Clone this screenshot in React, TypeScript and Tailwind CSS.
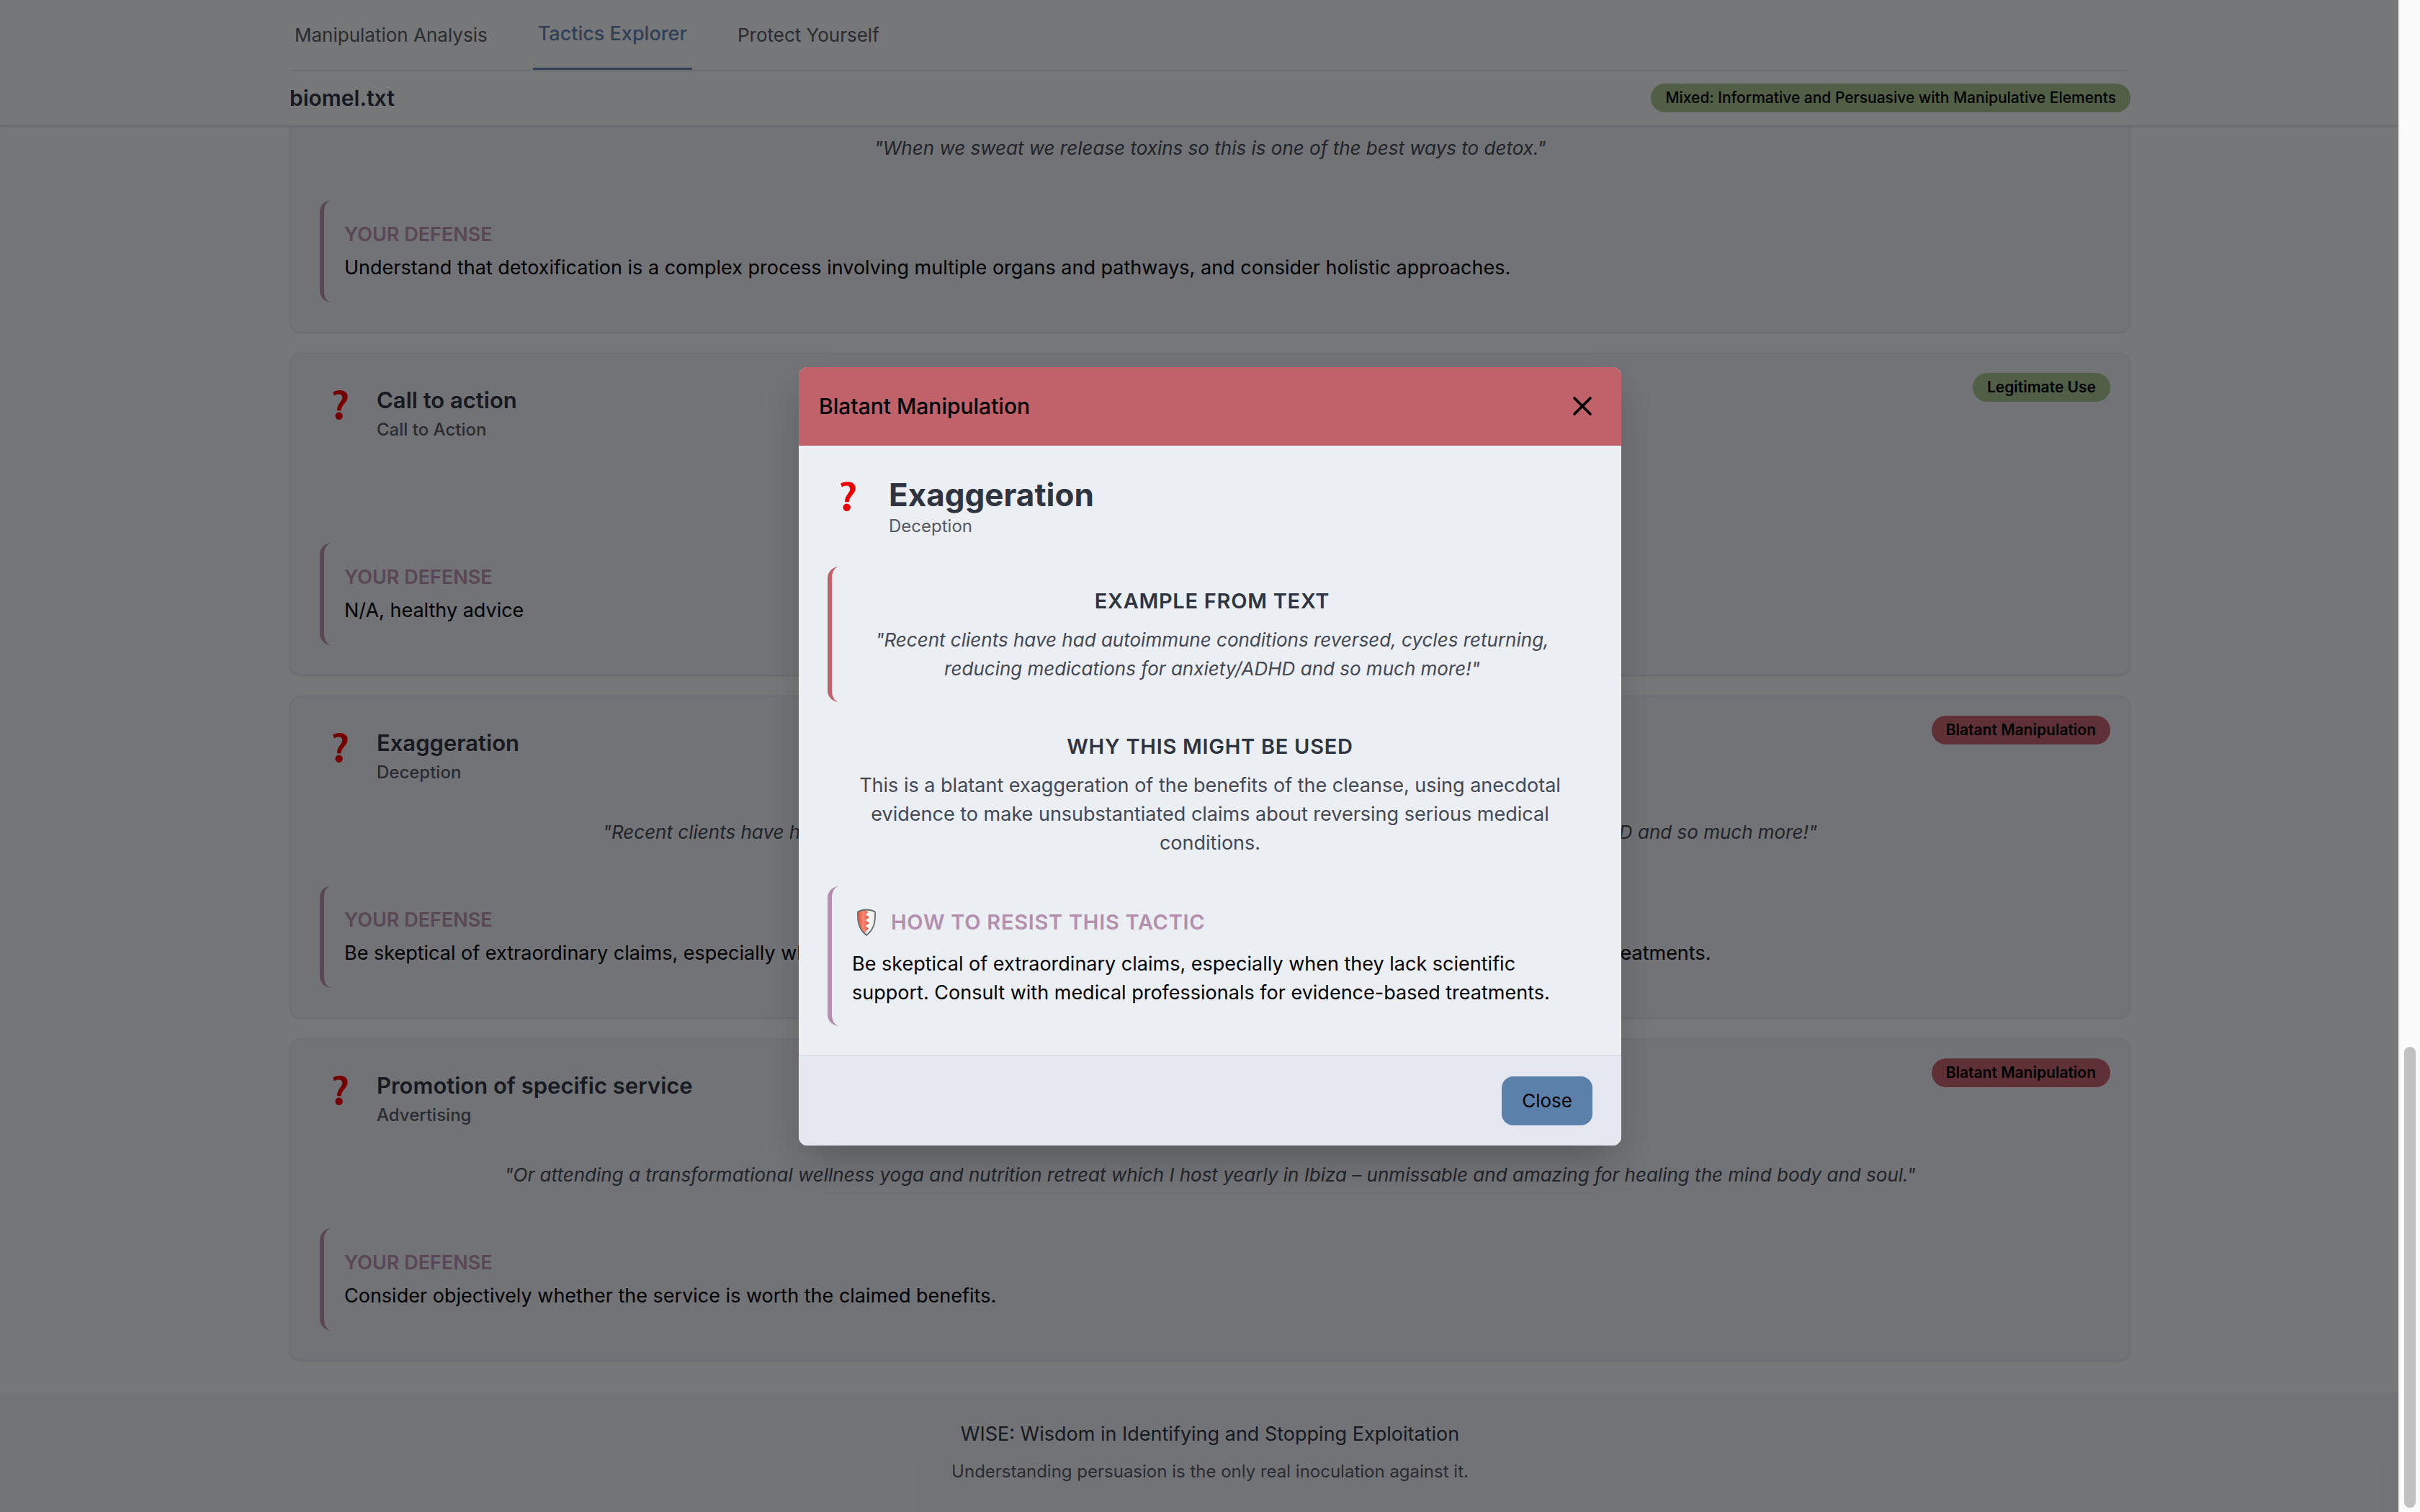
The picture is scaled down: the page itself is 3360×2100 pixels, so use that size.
import React from "react";
import { X } from "lucide-react";

type Tone = "green" | "red";

interface Tactic {
  name: string;
  category: string;
  rating: string;
  tone: Tone;
  quote: string;
  defense: string;
}

const tactics: Tactic[] = [
  {
    name: "Call to action",
    category: "Call to Action",
    rating: "Legitimate Use",
    tone: "green",
    quote: "",
    defense: "N/A, healthy advice",
  },
  {
    name: "Exaggeration",
    category: "Deception",
    rating: "Blatant Manipulation",
    tone: "red",
    quote:
      '"Recent clients have had autoimmune conditions reversed, cycles returning, reducing medications for anxiety/ADHD and so much more!"',
    defense:
      "Be skeptical of extraordinary claims, especially when they lack scientific support. Consult with medical professionals for evidence-based treatments.",
  },
  {
    name: "Promotion of specific service",
    category: "Advertising",
    rating: "Blatant Manipulation",
    tone: "red",
    quote:
      '"Or attending a transformational wellness yoga and nutrition retreat which I host yearly in Ibiza – unmissable and amazing for healing the mind body and soul."',
    defense: "Consider objectively whether the service is worth the claimed benefits.",
  },
];

function QuestionMark({ className }: { className: string }) {
  return (
    <svg viewBox="0 0 21 41" className={className} aria-hidden="true">
      <path
        d="M0.300 2.600C3 .9 6.200 0 9.800 0c6.600 0 10.900 3.500 10.900 9.100 0 4.300-2.200 7-4.700 9.800-2.500 2.900-4.200 5.200-4.300 9.300H6.100c-.1-5.300 1.900-8.500 4.300-11.700 1.700-2.300 2.900-4 2.900-6.400 0-2.900-1.900-4.700-5-4.700-2.300 0-4.500.7-6.400 2.100z"
        fill="#ec0000"
      />
      <circle cx="8.700" cy="35.700" r="5.200" fill="#ec0000" />
    </svg>
  );
}

function Shield() {
  return (
    <svg viewBox="0 0 28 38" className="h-[38px] w-7" aria-hidden="true">
      <defs>
        <linearGradient id="shieldRed" x1="0" x2="1">
          <stop offset="0" stopColor="#e2543f" />
          <stop offset="0.5" stopColor="#f98a76" />
          <stop offset="1" stopColor="#dd4a35" />
        </linearGradient>
        <linearGradient id="shieldSilver" x1="0" x2="1">
          <stop offset="0" stopColor="#b4b6b8" />
          <stop offset="0.5" stopColor="#d6d8d9" />
          <stop offset="0.6" stopColor="#ffffff" />
          <stop offset="1" stopColor="#e8e8e8" />
        </linearGradient>
      </defs>
      <path d="M14 1.500C10 1.500 5.500 2.500 2 4.500 1.500 15 2 28 14 37 26 28 26.500 15 26 4.500 22.500 2.500 18 1.500 14 1.500z" fill="url(#shieldSilver)" />
      <path d="M12.500 2C9 2.200 5 3 2.500 4.800 2 15 2.500 26 12.500 35.500V31l5-3-5-4 5.500-4-5.500-4 5.500-4-5.500-4 4-3z" fill="url(#shieldRed)" />
      <path
        d="M14 1.500C10 1.500 5.500 2.500 2 4.500 1.500 15 2 28 14 37 26 28 26.500 15 26 4.500 22.500 2.500 18 1.500 14 1.500z"
        fill="none"
        stroke="#6b6d6d"
        strokeWidth="1.800"
      />
    </svg>
  );
}

function Badge({ tone, className, children }: { tone: Tone; className: string; children: React.ReactNode }) {
  return (
    <span
      className={
        "rounded-full px-5 text-[21px] leading-10 text-black " +
        (tone === "green" ? "bg-[#a3be8c] " : "bg-[#bf616a] ") +
        className
      }
    >
      {children}
    </span>
  );
}

function Defense({ text }: { text: string }) {
  return (
    <div className="rounded-2xl border-l-6 border-[#b48ead] p-7">
      <h4 className="text-[27px] leading-10 font-semibold text-[#b48ead]">YOUR DEFENSE</h4>
      <p className="mt-1.5 text-[27px] leading-10 text-black">{text}</p>
    </div>
  );
}

function TacticCard({ tactic }: { tactic: Tactic }) {
  return (
    <article className="relative rounded-2xl border-2 border-[#dfe1ea] bg-[#e5e7ee] px-10 pt-11 pb-10 shadow-sm">
      <div className="absolute top-[26px] right-[26px] flex">
        <Badge tone={tactic.tone} className="font-semibold">
          {tactic.rating}
        </Badge>
      </div>
      <div className="flex gap-10 pl-[18px]">
        <QuestionMark className="mt-[6px] h-[41px] w-[21px]" />
        <div>
          <h3 className="text-[31px] leading-10 font-semibold text-[#2e3440]">{tactic.name}</h3>
          <p className="text-2xl leading-[42px] font-medium text-[#545963]">{tactic.category}</p>
        </div>
      </div>
      <p className="mt-[42px] mb-[54px] min-h-10 text-center text-[26px] leading-10 text-[#434853] italic">
        {tactic.quote}
      </p>
      <Defense text={tactic.defense} />
    </article>
  );
}

function TacticDialog() {
  return (
    <section
      role="dialog"
      aria-labelledby="dialog-title"
      className="w-[1142px] overflow-hidden rounded-xl bg-[#ebeef3] shadow-2xl"
    >
      <header className="flex h-[109px] items-center justify-between bg-[#c1616a] px-7">
        <h2 className="text-[30px] font-medium text-black">Blatant Manipulation</h2>
        <button type="button" aria-label="Close dialog" className="p-1 text-black">
          <X className="size-11" strokeWidth={2} />
        </button>
      </header>
      <div className="px-10 pt-10 pb-10">
        <div className="flex gap-[46px] pl-[18px]">
          <QuestionMark className="mt-[10px] h-[41px] w-[21px]" />
          <div>
            <h3 id="dialog-title" className="text-[44px] leading-14 font-bold text-[#2e3440]">
              Exaggeration
            </h3>
            <p className="text-2xl leading-8 text-[#545963]">Deception</p>
          </div>
        </div>
        <div className="mt-10 rounded-2xl border-l-6 border-[#c1616a] px-8 pt-7 pb-[26px] text-center">
          <h4 className="text-[29px] leading-10 font-semibold tracking-wide text-[#2e3440]">EXAMPLE FROM TEXT</h4>
          <p className="mt-[14px] text-[26px] leading-10 text-[#434853] italic">
            "Recent clients have had autoimmune conditions reversed, cycles returning, reducing medications for
            anxiety/ADHD and so much more!"
          </p>
        </div>
        <div className="mt-[42px] px-8 text-center">
          <h4 className="text-[29px] leading-10 font-semibold tracking-wide text-[#2e3440]">WHY THIS MIGHT BE USED</h4>
          <p className="mt-[14px] text-[27px] leading-10 text-[#434853]">
            This is a blatant exaggeration of the benefits of the cleanse, using anecdotal evidence to make
            unsubstantiated claims about reversing serious medical conditions.
          </p>
        </div>
        <div className="mt-10 rounded-2xl border-l-6 border-[#b48ead] px-7 pt-7 pb-[26px]">
          <div className="flex items-center gap-5 pl-[6px]">
            <Shield />
            <h4 className="text-[29px] leading-11 font-semibold tracking-wide text-[#b48ead]">
              HOW TO RESIST THIS TACTIC
            </h4>
          </div>
          <p className="mt-4 text-[27px] leading-10 text-black">
            Be skeptical of extraordinary claims, especially when they lack scientific support. Consult with medical
            professionals for evidence-based treatments.
          </p>
        </div>
      </div>
      <footer className="flex justify-end border-t-2 border-[#d8dfe9] bg-[#e5e8f0] px-10 py-7">
        <button type="button" className="h-17 rounded-2xl bg-[#5b81ab] px-7 text-[26px] text-black">
          Close
        </button>
      </footer>
    </section>
  );
}

export default function App() {
  return (
    <div className="relative h-screen overflow-hidden bg-[#eceef0] font-['Inter',sans-serif]">
      <div className="flex h-full flex-col">
        <div className="z-10 border-b-2 border-[#dddfe9] bg-[#eceef0] px-[402px] shadow-sm">
          <nav className="flex h-[99px] gap-14 border-b-2 border-[#dddfe9]">
            <a href="#analysis" className="flex items-center px-[7px] text-[26px] text-[#545963]">
              Manipulation Analysis
            </a>
            <a
              href="#tactics"
              className="flex items-center border-b-3 border-[#5e81ac] px-[7px] text-[27px] font-medium text-[#5e81ac]"
            >
              Tactics Explorer
            </a>
            <a href="#protect" className="flex items-center px-[7px] text-[26px] text-[#545963]">
              Protect Yourself
            </a>
          </nav>
          <div className="flex h-[74px] items-center justify-between">
            <h1 className="text-[30px] font-semibold text-[#2e3440]">biomel.txt</h1>
            <Badge tone="green" className="font-medium">
              Mixed: Informative and Persuasive with Manipulative Elements
            </Badge>
          </div>
        </div>
        <main className="px-[402px] pb-11">
          <article className="rounded-b-2xl border-x-2 border-b-2 border-[#dfe1ea] bg-[#e5e7ee] px-10 pt-[11px] pb-10 shadow-sm">
            <p className="mb-[52px] text-center text-[26px] leading-10 text-[#434853] italic">
              "When we sweat we release toxins so this is one of the best ways to detox."
            </p>
            <Defense text="Understand that detoxification is a complex process involving multiple organs and pathways, and consider holistic approaches." />
          </article>
          <div className="mt-7 flex flex-col gap-7">
            {tactics.map((t) => (
              <TacticCard key={t.name} tactic={t} />
            ))}
          </div>
        </main>
        <footer className="flex-1 bg-[#e5e7ee] pt-[38px] text-center">
          <p className="text-[27px] leading-10 text-[#2e3440]">WISE: Wisdom in Identifying and Stopping Exploitation</p>
          <p className="mt-3 text-2xl leading-10 text-[#545963]">
            Understanding persuasion is the only real inoculation against it.
          </p>
        </footer>
      </div>
      <div className="absolute inset-0 z-20 flex items-center justify-center bg-black/50">
        <TacticDialog />
      </div>
      <div className="absolute inset-y-0 right-0 z-30 w-[30px] border-l-2 border-[#ececec] bg-[#fbfbfb]">
        <div className="absolute top-[1454px] bottom-[6px] left-[6px] w-4 rounded-full bg-[#c1c1c1]" />
      </div>
    </div>
  );
}
